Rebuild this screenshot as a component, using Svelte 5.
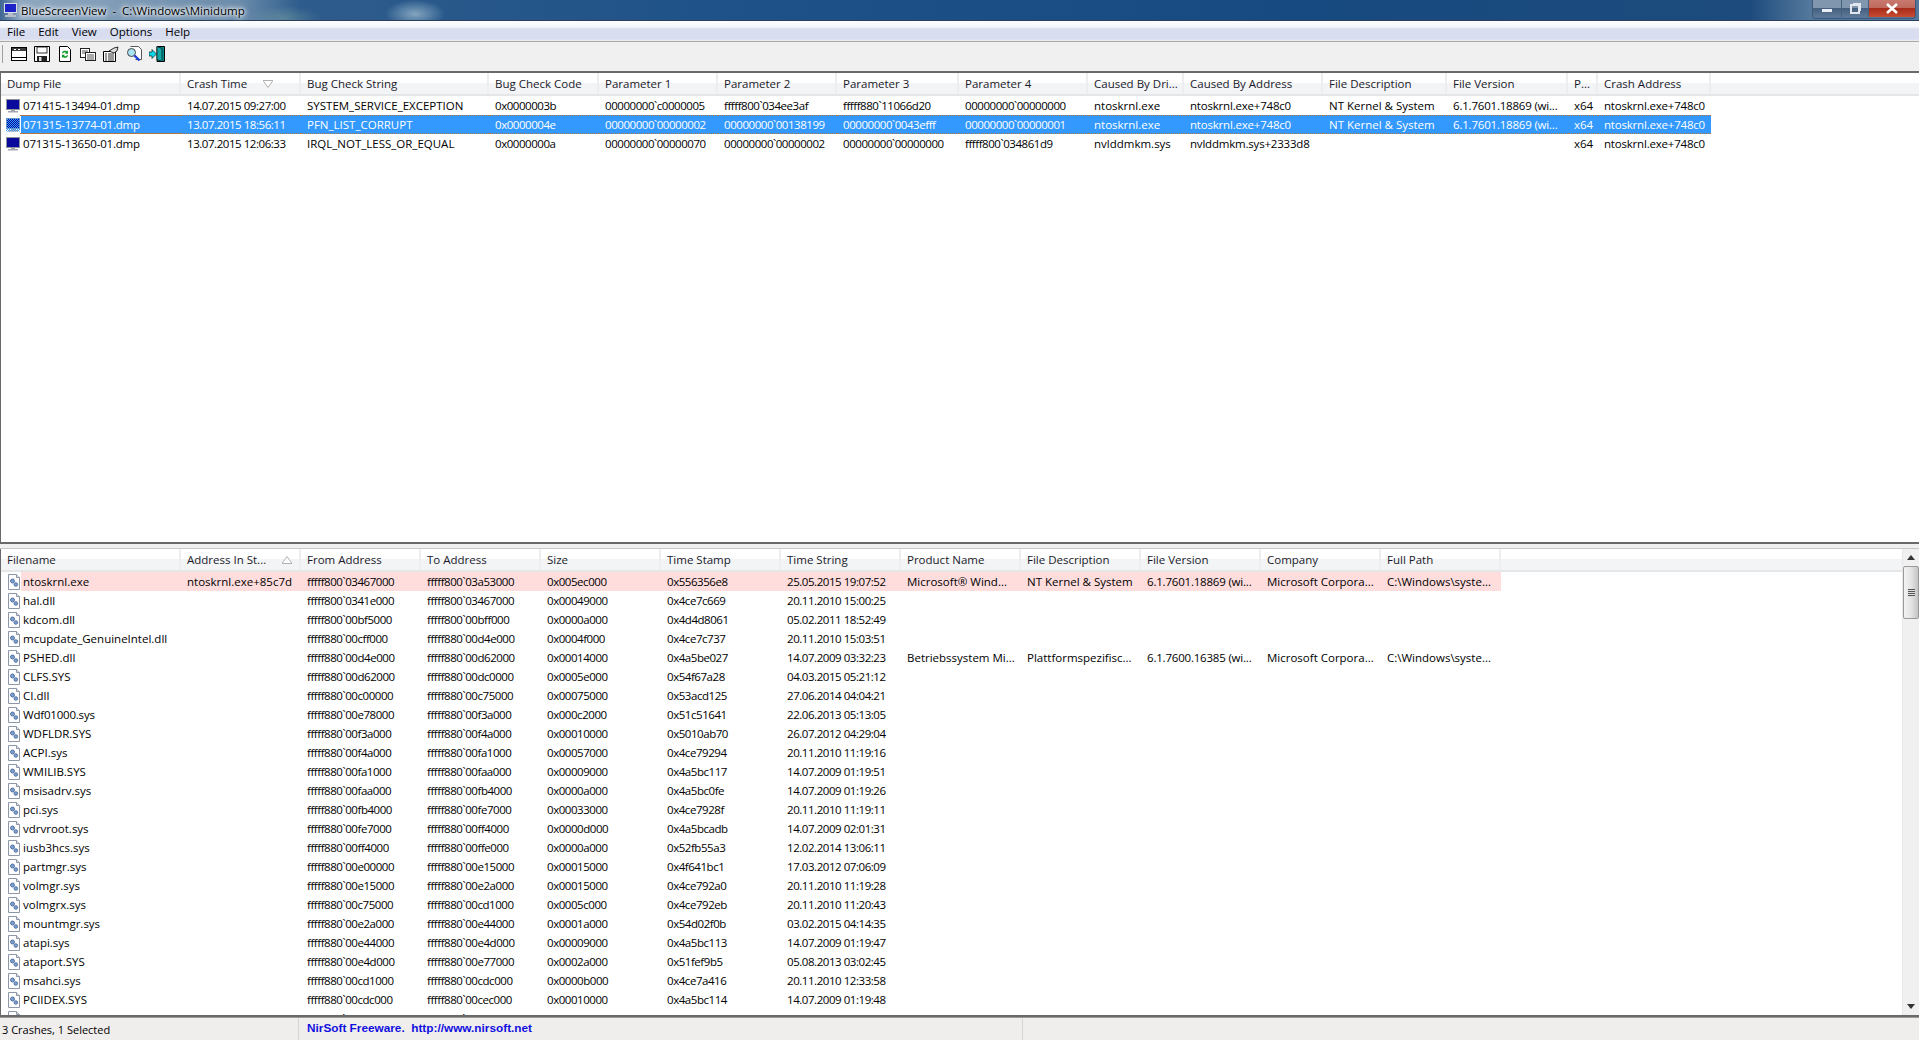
<script lang="ts">
  const menus = ['File', 'Edit', 'View', 'Options', 'Help'];

  const crashHeads = ['Dump File', 'Crash Time', 'Bug Check String', 'Bug Check Code', 'Parameter 1', 'Parameter 2', 'Parameter 3', 'Parameter 4', 'Caused By Dri...', 'Caused By Address', 'File Description', 'File Version', 'P...', 'Crash Address'];
  const crashTemplate = '180px 120px 188px 110px 119px 119px 122px 129px 96px 139px 124px 121px 30px 113px';

  const crashes = [
    ['071415-13494-01.dmp', '14.07.2015 09:27:00', 'SYSTEM_SERVICE_EXCEPTION', '0x0000003b', '00000000`c0000005', 'fffff800`034ee3af', 'fffff880`11066d20', '00000000`00000000', 'ntoskrnl.exe', 'ntoskrnl.exe+748c0', 'NT Kernel & System', '6.1.7601.18869 (wi...', 'x64', 'ntoskrnl.exe+748c0'],
    ['071315-13774-01.dmp', '13.07.2015 18:56:11', 'PFN_LIST_CORRUPT', '0x0000004e', '00000000`00000002', '00000000`00138199', '00000000`0043efff', '00000000`00000001', 'ntoskrnl.exe', 'ntoskrnl.exe+748c0', 'NT Kernel & System', '6.1.7601.18869 (wi...', 'x64', 'ntoskrnl.exe+748c0'],
    ['071315-13650-01.dmp', '13.07.2015 12:06:33', 'IRQL_NOT_LESS_OR_EQUAL', '0x0000000a', '00000000`00000070', '00000000`00000002', '00000000`00000000', 'fffff800`034861d9', 'nvlddmkm.sys', 'nvlddmkm.sys+2333d8', '', '', 'x64', 'ntoskrnl.exe+748c0']
  ];

  const driverHeads = ['Filename', 'Address In St...', 'From Address', 'To Address', 'Size', 'Time Stamp', 'Time String', 'Product Name', 'File Description', 'File Version', 'Company', 'Full Path'];

  const ms = 'Microsoft Corpora...';
  const sys = 'C:\\Windows\\syste...';
  const drivers = [
    ['ntoskrnl.exe', 'ntoskrnl.exe+85c7d', 'fffff800`03467000', 'fffff800`03a53000', '0x005ec000', '0x556356e8', '25.05.2015 19:07:52', 'Microsoft® Wind...', 'NT Kernel & System', '6.1.7601.18869 (wi...', ms, sys],
    ['hal.dll', '', 'fffff800`0341e000', 'fffff800`03467000', '0x00049000', '0x4ce7c669', '20.11.2010 15:00:25'],
    ['kdcom.dll', '', 'fffff800`00bf5000', 'fffff800`00bff000', '0x0000a000', '0x4d4d8061', '05.02.2011 18:52:49'],
    ['mcupdate_GenuineIntel.dll', '', 'fffff880`00cff000', 'fffff880`00d4e000', '0x0004f000', '0x4ce7c737', '20.11.2010 15:03:51'],
    ['PSHED.dll', '', 'fffff880`00d4e000', 'fffff880`00d62000', '0x00014000', '0x4a5be027', '14.07.2009 03:32:23', 'Betriebssystem Mi...', 'Plattformspezifisc...', '6.1.7600.16385 (wi...', ms, sys],
    ['CLFS.SYS', '', 'fffff880`00d62000', 'fffff880`00dc0000', '0x0005e000', '0x54f67a28', '04.03.2015 05:21:12'],
    ['CI.dll', '', 'fffff880`00c00000', 'fffff880`00c75000', '0x00075000', '0x53acd125', '27.06.2014 04:04:21'],
    ['Wdf01000.sys', '', 'fffff880`00e78000', 'fffff880`00f3a000', '0x000c2000', '0x51c51641', '22.06.2013 05:13:05'],
    ['WDFLDR.SYS', '', 'fffff880`00f3a000', 'fffff880`00f4a000', '0x00010000', '0x5010ab70', '26.07.2012 04:29:04'],
    ['ACPI.sys', '', 'fffff880`00f4a000', 'fffff880`00fa1000', '0x00057000', '0x4ce79294', '20.11.2010 11:19:16'],
    ['WMILIB.SYS', '', 'fffff880`00fa1000', 'fffff880`00faa000', '0x00009000', '0x4a5bc117', '14.07.2009 01:19:51'],
    ['msisadrv.sys', '', 'fffff880`00faa000', 'fffff880`00fb4000', '0x0000a000', '0x4a5bc0fe', '14.07.2009 01:19:26'],
    ['pci.sys', '', 'fffff880`00fb4000', 'fffff880`00fe7000', '0x00033000', '0x4ce7928f', '20.11.2010 11:19:11'],
    ['vdrvroot.sys', '', 'fffff880`00fe7000', 'fffff880`00ff4000', '0x0000d000', '0x4a5bcadb', '14.07.2009 02:01:31'],
    ['iusb3hcs.sys', '', 'fffff880`00ff4000', 'fffff880`00ffe000', '0x0000a000', '0x52fb55a3', '12.02.2014 13:06:11'],
    ['partmgr.sys', '', 'fffff880`00e00000', 'fffff880`00e15000', '0x00015000', '0x4f641bc1', '17.03.2012 07:06:09'],
    ['volmgr.sys', '', 'fffff880`00e15000', 'fffff880`00e2a000', '0x00015000', '0x4ce792a0', '20.11.2010 11:19:28'],
    ['volmgrx.sys', '', 'fffff880`00c75000', 'fffff880`00cd1000', '0x0005c000', '0x4ce792eb', '20.11.2010 11:20:43'],
    ['mountmgr.sys', '', 'fffff880`00e2a000', 'fffff880`00e44000', '0x0001a000', '0x54d02f0b', '03.02.2015 04:14:35'],
    ['atapi.sys', '', 'fffff880`00e44000', 'fffff880`00e4d000', '0x00009000', '0x4a5bc113', '14.07.2009 01:19:47'],
    ['ataport.SYS', '', 'fffff880`00e4d000', 'fffff880`00e77000', '0x0002a000', '0x51fef9b5', '05.08.2013 03:02:45'],
    ['msahci.sys', '', 'fffff880`00cd1000', 'fffff880`00cdc000', '0x0000b000', '0x4ce7a416', '20.11.2010 12:33:58'],
    ['PCIIDEX.SYS', '', 'fffff880`00cdc000', 'fffff880`00cec000', '0x00010000', '0x4a5bc114', '14.07.2009 01:19:48'],
    ['intelide.sys', '', 'fffff880`01000000', 'fffff880`01014000', '0x00014000', '0x4a5bc115', '14.07.2009 01:19:49']
  ];

  // digits in the original font are narrower, so hex and date cells get tightened
  function spacing(text: string) {
    if (text.length > 8 && /^[0-9a-fx.`: ]+$/.test(text)) return 'num';
    if (/\d{3}/.test(text)) return 'mixed';
    return '';
  }
</script>

<div class="window">
  <header class="titlebar">
    <svg class="app-icon" width="16" height="16" viewBox="0 0 16 16">
      <rect x="1" y="1" width="13" height="10" fill="#d8dce6" />
      <rect x="2" y="2" width="11" height="8" fill="#1a22c8" />
      <path d="M5 11h5v2h3v2H2v-2h3z" fill="#b8bcc8" />
    </svg>
    <span class="title">BlueScreenView&nbsp; - &nbsp;C:\Windows\Minidump</span>
    <div class="caption">
      <span class="cap min"><i></i></span>
      <span class="cap max"><i></i></span>
      <span class="cap close">
        <svg width="14" height="11" viewBox="0 0 14 11"><path d="M2 1l10 9M12 1L2 10" stroke="#fff" stroke-width="2.6" /></svg>
      </span>
    </div>
  </header>

  <nav class="menubar">
    {#each menus as m}
      <span class="menu">{m}</span>
    {/each}
  </nav>

  <div class="toolbar">
    <span class="grip"></span>
    <button class="tool" aria-label="Open">
      <svg width="16" height="16" viewBox="0 0 16 16">
        <rect x="0.5" y="1.5" width="15" height="13" fill="#fff" stroke="#000" />
        <rect x="1" y="2" width="14" height="3" fill="#3c3c3c" />
        <path d="M3 3.500h2M7 3.500h2" stroke="#fff" />
        <path d="M1 11.500h14" stroke="#000" />
      </svg>
    </button>
    <button class="tool" aria-label="Save">
      <svg width="16" height="16" viewBox="0 0 16 16">
        <path d="M0.5 0.5h15v15h-15z" fill="#fff" stroke="#000" />
        <rect x="3" y="1" width="10" height="6" fill="#fff" stroke="#000" stroke-width="0.8" />
        <rect x="3" y="10" width="10" height="5.500" fill="#222" />
        <rect x="5" y="11" width="2.500" height="4" fill="#ddd" />
      </svg>
    </button>
    <button class="tool" aria-label="Refresh">
      <svg width="16" height="16" viewBox="0 0 16 16">
        <path d="M2.500 0.500h8l3 3v12h-11z" fill="#fff" stroke="#000" />
        <path d="M5 7a3 3 0 0 1 5-1.500l1-1v3.200h-3l1-1a2 2 0 0 0-3 .8z" fill="#0a9a20" />
        <path d="M11 9.500a3 3 0 0 1-5 1.500l-1 1v-3.200h3l-1 1a2 2 0 0 0 3-.8z" fill="#0a9a20" />
      </svg>
    </button>
    <button class="tool" aria-label="Copy">
      <svg width="16" height="16" viewBox="0 0 16 16">
        <rect x="0.500" y="2.500" width="9" height="9" fill="#fff" stroke="#222" />
        <rect x="5.500" y="6.500" width="10" height="8" fill="#fff" stroke="#222" />
        <path d="M7 9h7M7 11h7M7 13h7M2 5h6M2 7h3" stroke="#555" />
      </svg>
    </button>
    <button class="tool" aria-label="Properties">
      <svg width="16" height="16" viewBox="0 0 16 16">
        <path d="M0.500 5.500h12v10h-12z" fill="#fff" stroke="#000" />
        <path d="M2 8h2M5 8h6M2 10h2M5 10h6M2 12h2M5 12h6M2 14h2M5 14h6" stroke="#333" />
        <path d="M6 5l5-3 4-1-1 4-3 2z" fill="#ddd" stroke="#000" stroke-width="0.800" />
      </svg>
    </button>
    <button class="tool" aria-label="Find">
      <svg width="16" height="16" viewBox="0 0 16 16">
        <path d="M4.500 0.500h8l3 3v10h-6" fill="#fff" stroke="#555" />
        <circle cx="5.500" cy="6.500" r="4" fill="#a8e4f4" stroke="#444" />
        <path d="M8.500 9.500l5 5" stroke="#1e3cd8" stroke-width="2.400" />
      </svg>
    </button>
    <button class="tool" aria-label="Exit">
      <svg width="16" height="16" viewBox="0 0 16 16">
        <path d="M8 0.500h7.500v15H8z" fill="#0a8a8a" stroke="#000" />
        <path d="M8 0.500l5 2v13l-5-2z" fill="#12a8a8" stroke="#000" stroke-width="0.600" />
        <path d="M0 6h3V3.500L7.500 8 3 12.500V10H0z" fill="#10d8e8" stroke="#000" stroke-width="0.600" />
      </svg>
    </button>
  </div>

  <section class="pane top">
    <div class="lv-head" style="grid-template-columns: {crashTemplate}">
      {#each crashHeads as h, i}
        <div class="hcell">
          <span>{h}</span>
          {#if i === 1}
            <svg class="sort" width="10" height="8" viewBox="0 0 10 8"><path d="M0 0.500h10L5 7.500z" fill="#fff" stroke="#b0b0b0" /></svg>
          {/if}
        </div>
      {/each}
    </div>
    {#each crashes as row, r}
      <div class="lv-row crash" class:selected={r === 1} style="grid-template-columns: {crashTemplate}">
        {#each row as cell, i}
          <div class="cell {spacing(cell)}" class:first={i === 0}>
            {#if i === 0}
              <svg class="row-icon" width="16" height="16" viewBox="0 0 16 16">
                <defs>
                  <pattern id="dither{r}" width="2" height="2" patternUnits="userSpaceOnUse">
                    <rect width="1" height="1" fill="#3399ff" />
                    <rect x="1" y="1" width="1" height="1" fill="#3399ff" />
                  </pattern>
                </defs>
                <rect x="1" y="1" width="14" height="11" fill="#8f939a" />
                <rect x="2" y="2" width="12" height="9" fill="#0a0a9c" />
                <path d="M6 12h4v1h3v1.500H3V13h3z" fill="#a4a8ac" />
                {#if r === 1}
                  <rect x="1" y="1" width="14" height="13.500" fill="url(#dither{r})" />
                {/if}
              </svg>
            {/if}
            <span class="txt">{cell}</span>
          </div>
        {/each}
      </div>
    {/each}
  </section>

  <div class="splitter"></div>

  <section class="pane bottom">
    <div class="list-scroll">
      <div class="lv-head low">
        {#each driverHeads as h, i}
          <div class="hcell">
            <span>{h}</span>
            {#if i === 1}
              <svg class="sort" width="10" height="8" viewBox="0 0 10 8"><path d="M0 7.500h10L5 0.500z" fill="#fff" stroke="#b0b0b0" /></svg>
            {/if}
          </div>
        {/each}
      </div>
      {#each drivers as row, r}
        <div class="lv-row driver" class:hit={r === 0}>
          {#each row as cell, i}
            <div class="cell {spacing(cell)}" class:first={i === 0}>
              {#if i === 0}
                <svg class="row-icon" width="16" height="16" viewBox="0 0 16 16">
                  <path d="M3.500 0.500h8l3 3v12h-11z" fill="#fff" stroke="#8d97a5" />
                  <path d="M11.500 0.500v3h3" fill="#dfe4ea" stroke="#8d97a5" />
                  <circle cx="7.500" cy="7" r="2" fill="#7ea3d0" stroke="#3a5c90" stroke-width="0.800" />
                  <circle cx="10.800" cy="10.500" r="1.800" fill="#7ea3d0" stroke="#3a5c90" stroke-width="0.800" />
                </svg>
              {/if}
              <span class="txt">{cell}</span>
            </div>
          {/each}
        </div>
      {/each}
    </div>
    <div class="scrollbar">
      <div class="arrow"><svg width="8" height="5" viewBox="0 0 8 5"><path d="M4 0l4 5H0z" fill="#333" /></svg></div>
      <div class="thumb"><i></i></div>
      <div class="track"></div>
      <div class="arrow"><svg width="8" height="5" viewBox="0 0 8 5"><path d="M0 0h8L4 5z" fill="#333" /></svg></div>
    </div>
  </section>

  <footer class="statusbar">
    <div class="st st-count">3 Crashes, 1 Selected</div>
    <div class="st st-link">NirSoft Freeware.&nbsp; http://www.nirsoft.net</div>
    <div class="st"></div>
  </footer>
</div>

<style>
  :global(body) {
    margin: 0;
    overflow: hidden;
    background: #f0f0f0;
  }

  .window {
    height: 1040px;
    display: flex;
    flex-direction: column;
    font-family: "Open Sans", "Noto Sans", sans-serif;
    font-size: 11.5px;
    color: #000;
    overflow: hidden;
  }

  .titlebar {
    height: 21px;
    flex: none;
    display: flex;
    align-items: center;
    padding-left: 3px;
    gap: 2px;
    border-bottom: 1px solid #2a3f5c;
    box-sizing: border-box;
    background:
      radial-gradient(ellipse 30px 14px at 415px 14px, rgba(190, 215, 225, 0.6), transparent),
      radial-gradient(ellipse 36px 12px at 285px 18px, rgba(130, 170, 160, 0.4), transparent),
      linear-gradient(90deg, #3f6792 0, #8fa8c0 20px, #6b8cab 240px, #2e5c8c 300px, #1f5288 700px, #174a80 1300px, #1d4b7d 1750px, #54789c 1810px);
  }

  .title {
    font-size: 11.5px;
    color: #000;
    text-shadow: 0 0 6px #fff, 0 0 6px #fff, 0 0 3px #fff;
    white-space: nowrap;
  }

  .caption {
    margin-left: auto;
    margin-right: 3px;
    align-self: flex-start;
    display: flex;
    height: 18px;
    border: 1px solid #3f5a78;
    border-top: 0;
    border-radius: 0 0 4px 4px;
    overflow: hidden;
  }

  .cap {
    height: 17px;
    display: flex;
    align-items: center;
    justify-content: center;
    border-right: 1px solid #44617e;
    background: linear-gradient(#7f96ae, #7f96ae 45%, #455f7e 50%, #5e7a98);
  }

  .min { width: 28px; }
  .max { width: 26px; }
  .close {
    width: 46px;
    border-right: 0;
    background: linear-gradient(#c87a70, #c0685c 45%, #a82c1c 50%, #c84a30);
  }

  .min i {
    width: 10px;
    height: 3px;
    margin-top: 4px;
    background: #e8eef4;
  }

  .max i {
    width: 6px;
    height: 6px;
    border: 2px solid #dfe6ee;
    box-shadow: 2px -2px 0 -1px #dfe6ee;
  }

  .menubar {
    height: 21px;
    flex: none;
    box-sizing: border-box;
    display: flex;
    align-items: center;
    padding: 0 0 0 7px;
    gap: 13px;
    font-size: 11.5px;
    background: linear-gradient(#fdfdfe, #f4f6fb 30%, #d8ddf0 40%, #d8ddf0 90%, #f0f0f0);
    border-bottom: 1px solid #a8a8a8;
  }

  .toolbar {
    height: 31px;
    flex: none;
    box-sizing: border-box;
    display: flex;
    align-items: center;
    padding: 0 0 5px 2px;
    background: #f0f0f0;
    border-bottom: 2px solid #696969;
  }

  .grip {
    width: 1px;
    height: 18px;
    background: #a0a0a0;
    margin-right: 8px;
  }

  .tool {
    width: 16px;
    height: 16px;
    padding: 0;
    margin-right: 7px;
    border: 0;
    background: none;
    display: flex;
  }

  .pane {
    background: #fff;
    border-left: 1px solid #696969;
    box-sizing: border-box;
  }

  .pane.top {
    height: 471px;
    flex: none;
    border-bottom: 2px solid #696969;
    overflow: hidden;
  }

  .splitter {
    height: 4px;
    flex: none;
    background: #f0f0f0;
    border-bottom: 1px solid #c8c8c8;
  }

  .pane.bottom {
    flex: 1;
    min-height: 0;
    display: flex;
    overflow: hidden;
    border-bottom: 2px solid #696969;
  }

  .list-scroll {
    flex: 1;
    min-width: 0;
    overflow: hidden;
  }

  .lv-head {
    display: grid;
    height: 23px;
    background: linear-gradient(#fff 45%, #f3f4f6 50%, #f3f4f6);
    border-bottom: 2px solid #e4e6e8;
    box-sizing: border-box;
  }

  .low, .driver {
    grid-template-columns: 180px repeat(11, 120px);
  }

  .hcell {
    display: flex;
    align-items: center;
    padding-left: 6px;
    gap: 16px;
    border-right: 2px solid #eceef0;
    white-space: nowrap;
    overflow: hidden;
    color: #1a1a2a;
    font-size: 11.5px;
  }

  .sort {
    flex: none;
  }

  .lv-row {
    display: grid;
    height: 19px;
    align-items: center;
    white-space: nowrap;
  }

  .cell {
    height: 19px;
    line-height: 19px;
    padding-left: 6px;
    overflow: hidden;
    box-sizing: border-box;
  }

  .cell.num {
    letter-spacing: -0.45px;
  }

  .cell.mixed {
    letter-spacing: -0.2px;
  }

  .cell.first {
    display: flex;
    align-items: center;
    padding-left: 4px;
    gap: 2px;
  }

  .row-icon {
    flex: none;
  }

  .selected .cell {
    background: #3399ff;
    color: #fff;
    border-top: 1px dotted #b07840;
    border-bottom: 1px dotted #b07840;
    line-height: 17px;
  }

  .selected .cell.first {
    background: linear-gradient(90deg, #fff 20px, #3399ff 20px);
    border-image: linear-gradient(90deg, #fff 20px, #b07840 20px) 1;
  }

  .hit .cell {
    background: #ffdddd;
  }

  .hit .cell.first {
    background: linear-gradient(90deg, #fff 20px, #ffdddd 20px);
  }

  .scrollbar {
    width: 16px;
    flex: none;
    display: flex;
    flex-direction: column;
    background: #f0f0f0;
    border-left: 1px solid #e8e8e8;
  }

  .arrow {
    height: 17px;
    display: flex;
    align-items: center;
    justify-content: center;
    flex: none;
  }

  .thumb {
    height: 53px;
    flex: none;
    box-sizing: border-box;
    border: 1px solid #9a9a9a;
    border-radius: 2px;
    background: linear-gradient(90deg, #f2f2f2, #e4e4e4 50%, #c4c4c4);
    display: flex;
    align-items: center;
    justify-content: center;
  }

  .thumb i {
    width: 7px;
    height: 8px;
    background: repeating-linear-gradient(#555 0 1px, #ddd 1px 2px);
  }

  .track {
    flex: 1;
  }

  .statusbar {
    height: 23px;
    flex: none;
    display: flex;
    box-sizing: border-box;
    background: #f0eded;
    border-top: 1px solid #9a9a9a;
    font-size: 11px;
  }

  .st {
    flex: 1;
    padding: 4px 0 0 2px;
    white-space: nowrap;
  }

  .st-count {
    flex: 0 0 299px;
    box-sizing: border-box;
    border-right: 1px solid #d8d4d4;
  }

  .st-link {
    flex: 0 0 724px;
    box-sizing: border-box;
    padding: 3px 0 0 8px;
    border-right: 1px solid #d8d4d4;
    color: #1010e0;
    font-family: "Liberation Sans", sans-serif;
    font-weight: bold;
    font-size: 11.8px;
  }
</style>
